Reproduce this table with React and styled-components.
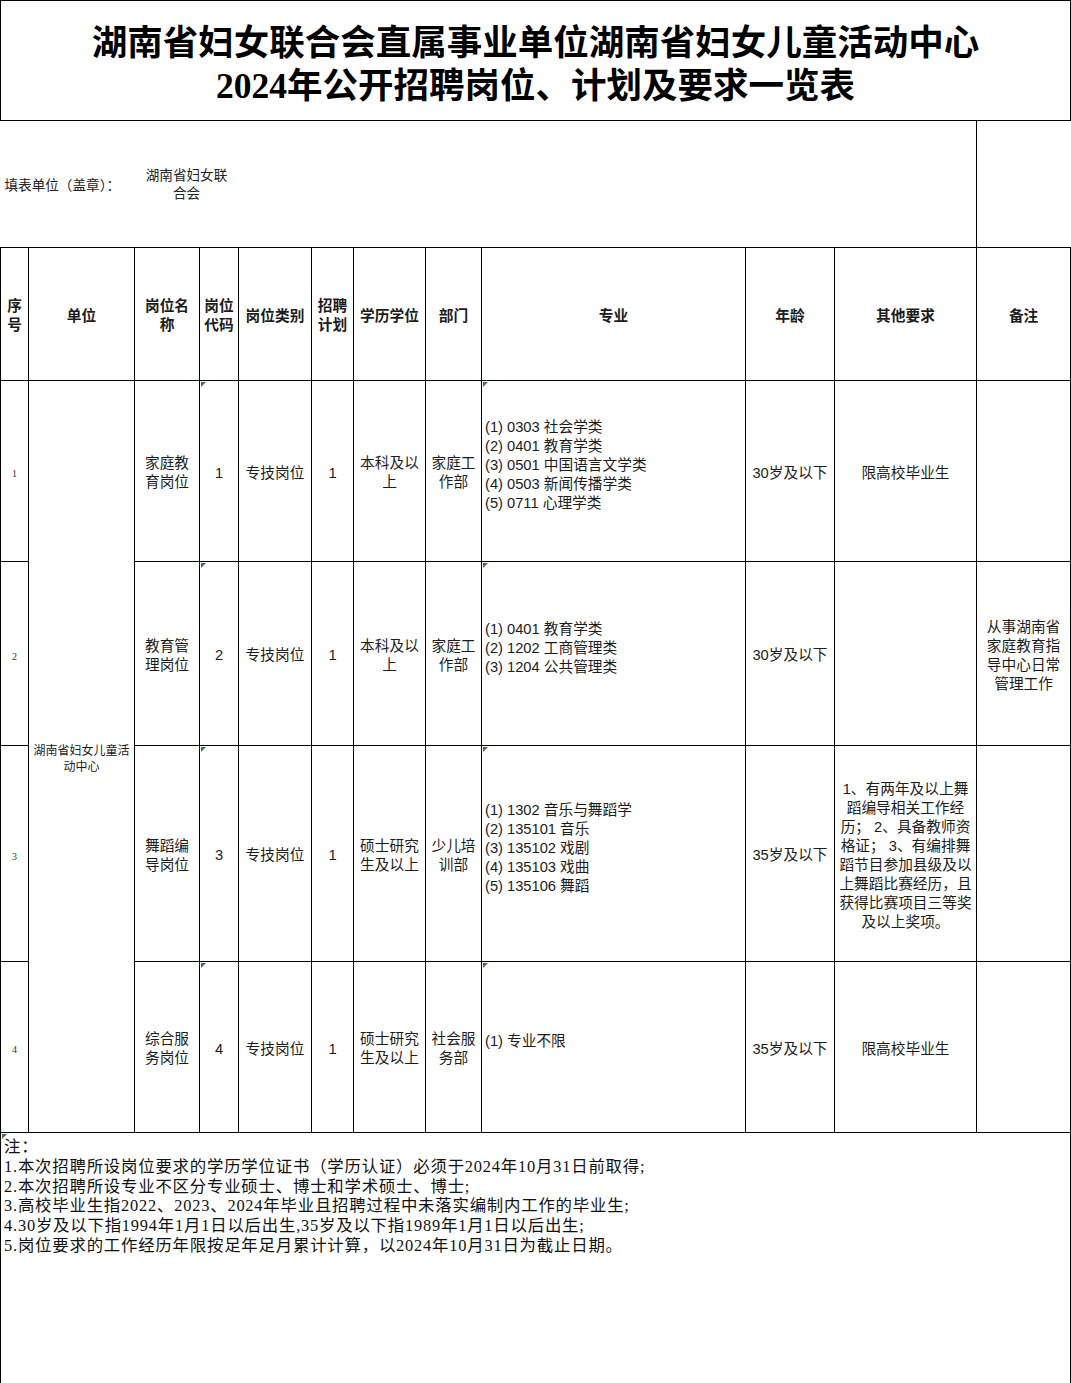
import React from "react";
import styled, { createGlobalStyle } from "styled-components";

const GlobalStyle = createGlobalStyle`
  html, body {
    margin: 0;
    padding: 0;
    background: #fff;
  }
  body {
    font-family: "Liberation Sans", "Noto Sans CJK SC", sans-serif;
    color: #1a1a1a;
  }
`;

const widths = [28, 106, 65, 39, 73, 42, 72, 56, 264, 89, 142, 94];

const Sheet = styled.table`
  width: 1070px;
  table-layout: fixed;
  border-collapse: collapse;
  font-size: 14.7px;
  line-height: 19px;
`;

const TitleRow = styled.tr`
  height: 120px;
`;

const TitleCell = styled.td`
  border: 1.5px solid #000;
  text-align: center;
  vertical-align: middle;
  padding: 8px 0 0;
  font-family: "Liberation Serif", "Noto Sans CJK SC", serif;
  font-weight: 700;
  font-size: 35.5px;
  line-height: 43px;
  color: #000;
`;

const FillRow = styled.tr`
  height: 127px;
`;

const FillLabel = styled.td`
  padding: 2px 0 0 4px;
  font-size: 13.6px;
  white-space: nowrap;
  vertical-align: middle;
  color: #222;
`;

const FillValue = styled.td`
  text-align: center;
  font-size: 13.6px;
  line-height: 18px;
  vertical-align: middle;
  padding-bottom: 0;
  color: #222;
`;

const FillEnd = styled.td`
  border-left: 1.5px solid #000;
`;

const Row = styled.tr`
  height: ${(p) => p.$h}px;
`;

const Cell = styled.td`
  position: relative;
  border: 1.5px solid #000;
  text-align: ${(p) => (p.$left ? "left" : "center")};
  vertical-align: middle;
  padding: ${(p) => (p.$left ? "3px 0 14px 3px" : "4px 1px 0")};
  white-space: ${(p) => (p.$left ? "pre" : "nowrap")};
  font-weight: ${(p) => (p.$head ? 700 : 400)};
  font-size: ${(p) => (p.$small ? "12px" : "14.7px")};
  line-height: ${(p) => (p.$small ? "16px" : "19px")};
  color: #1c1c1c;

  &::before {
    content: "";
    display: ${(p) => (p.$mark ? "block" : "none")};
    position: absolute;
    left: 1px;
    top: 1px;
    width: 0;
    height: 0;
    border-top: 5px solid #3f7a3a;
    border-right: 5px solid transparent;
  }
`;

const RowNo = styled.span`
  font-family: "Liberation Serif", serif;
  font-size: 10px;
  color: #333;
`;

const NoteCell = styled.td`
  position: relative;
  height: 250px;
  border: 1.5px solid #000;
  border-bottom: none;
  vertical-align: top;
  padding: 4px 0 0 3px;
  font-family: "Liberation Serif", "Noto Sans CJK SC", serif;
  font-size: 16.4px;
  letter-spacing: 0.8px;
  line-height: 19.8px;
  color: #111;
  white-space: nowrap;

  &::before {
    content: "";
    position: absolute;
    left: 1px;
    top: 1px;
    border-top: 5px solid #3f7a3a;
    border-right: 5px solid transparent;
  }
`;

function Lines({ items }) {
  return items.map((t, i) => (
    <React.Fragment key={i}>
      {i > 0 && <br />}
      {t}
    </React.Fragment>
  ));
}

const head = [
  ["序", "号"],
  ["单位"],
  ["岗位名", "称"],
  ["岗位", "代码"],
  ["岗位类别"],
  ["招聘", "计划"],
  ["学历学位"],
  ["部门"],
  ["专业"],
  ["年龄"],
  ["其他要求"],
  ["备注"],
];

const rows = [
  {
    h: 181,
    no: "1",
    name: ["家庭教", "育岗位"],
    code: "1",
    kind: "专技岗位",
    plan: "1",
    edu: ["本科及以", "上"],
    dept: ["家庭工", "作部"],
    major: [
      "(1) 0303 社会学类",
      "(2) 0401 教育学类",
      "(3) 0501 中国语言文学类",
      "(4) 0503 新闻传播学类",
      "(5) 0711 心理学类",
    ],
    age: "30岁及以下",
    other: ["限高校毕业生"],
    note: [],
  },
  {
    h: 184,
    no: "2",
    name: ["教育管", "理岗位"],
    code: "2",
    kind: "专技岗位",
    plan: "1",
    edu: ["本科及以", "上"],
    dept: ["家庭工", "作部"],
    major: ["(1) 0401 教育学类", "(2) 1202 工商管理类", "(3) 1204 公共管理类"],
    age: "30岁及以下",
    other: [],
    note: ["从事湖南省", "家庭教育指", "导中心日常", "管理工作"],
  },
  {
    h: 216,
    no: "3",
    name: ["舞蹈编", "导岗位"],
    code: "3",
    kind: "专技岗位",
    plan: "1",
    edu: ["硕士研究", "生及以上"],
    dept: ["少儿培", "训部"],
    major: [
      "(1) 1302 音乐与舞蹈学",
      "(2) 135101 音乐",
      "(3) 135102 戏剧",
      "(4) 135103 戏曲",
      "(5) 135106 舞蹈",
    ],
    age: "35岁及以下",
    other: [
      "1、有两年及以上舞",
      "蹈编导相关工作经",
      "历；  2、具备教师资",
      "格证；  3、有编排舞",
      "蹈节目参加县级及以",
      "上舞蹈比赛经历，且",
      "获得比赛项目三等奖",
      "及以上奖项。",
    ],
    note: [],
  },
  {
    h: 171,
    no: "4",
    name: ["综合服", "务岗位"],
    code: "4",
    kind: "专技岗位",
    plan: "1",
    edu: ["硕士研究", "生及以上"],
    dept: ["社会服", "务部"],
    major: ["(1) 专业不限"],
    age: "35岁及以下",
    other: ["限高校毕业生"],
    note: [],
  },
];

const notes = [
  "注：",
  "1.本次招聘所设岗位要求的学历学位证书（学历认证）必须于2024年10月31日前取得;",
  "2.本次招聘所设专业不区分专业硕士、博士和学术硕士、博士;",
  "3.高校毕业生指2022、2023、2024年毕业且招聘过程中未落实编制内工作的毕业生;",
  "4.30岁及以下指1994年1月1日以后出生,35岁及以下指1989年1月1日以后出生;",
  "5.岗位要求的工作经历年限按足年足月累计计算，以2024年10月31日为截止日期。",
];

export default function App() {
  return (
    <>
      <GlobalStyle />
      <Sheet>
        <colgroup>
          {widths.map((w, i) => (
            <col key={i} style={{ width: w }} />
          ))}
        </colgroup>
        <tbody>
          <TitleRow>
            <TitleCell colSpan={12}>
              湖南省妇女联合会直属事业单位湖南省妇女儿童活动中心
              <br />
              2024年公开招聘岗位、计划及要求一览表
            </TitleCell>
          </TitleRow>
          <FillRow>
            <FillLabel colSpan={2}>填表单位（盖章）：</FillLabel>
            <FillValue colSpan={2}>
              <Lines items={["湖南省妇女联", "合会"]} />
            </FillValue>
            <td colSpan={7} />
            <FillEnd />
          </FillRow>
          <Row $h={133}>
            {head.map((h, i) => (
              <Cell key={i} $head>
                <Lines items={h} />
              </Cell>
            ))}
          </Row>
          {rows.map((r, i) => (
            <Row key={r.no} $h={r.h}>
              <Cell>
                <RowNo>{r.no}</RowNo>
              </Cell>
              {i === 0 && (
                <Cell rowSpan={4} $small>
                  <Lines items={["湖南省妇女儿童活", "动中心"]} />
                </Cell>
              )}
              <Cell>
                <Lines items={r.name} />
              </Cell>
              <Cell $mark>{r.code}</Cell>
              <Cell>{r.kind}</Cell>
              <Cell>{r.plan}</Cell>
              <Cell>
                <Lines items={r.edu} />
              </Cell>
              <Cell>
                <Lines items={r.dept} />
              </Cell>
              <Cell $left $mark>
                <Lines items={r.major} />
              </Cell>
              <Cell>{r.age}</Cell>
              <Cell>
                <Lines items={r.other} />
              </Cell>
              <Cell>
                <Lines items={r.note} />
              </Cell>
            </Row>
          ))}
          <tr>
            <NoteCell colSpan={12}>
              <Lines items={notes} />
            </NoteCell>
          </tr>
        </tbody>
      </Sheet>
    </>
  );
}
